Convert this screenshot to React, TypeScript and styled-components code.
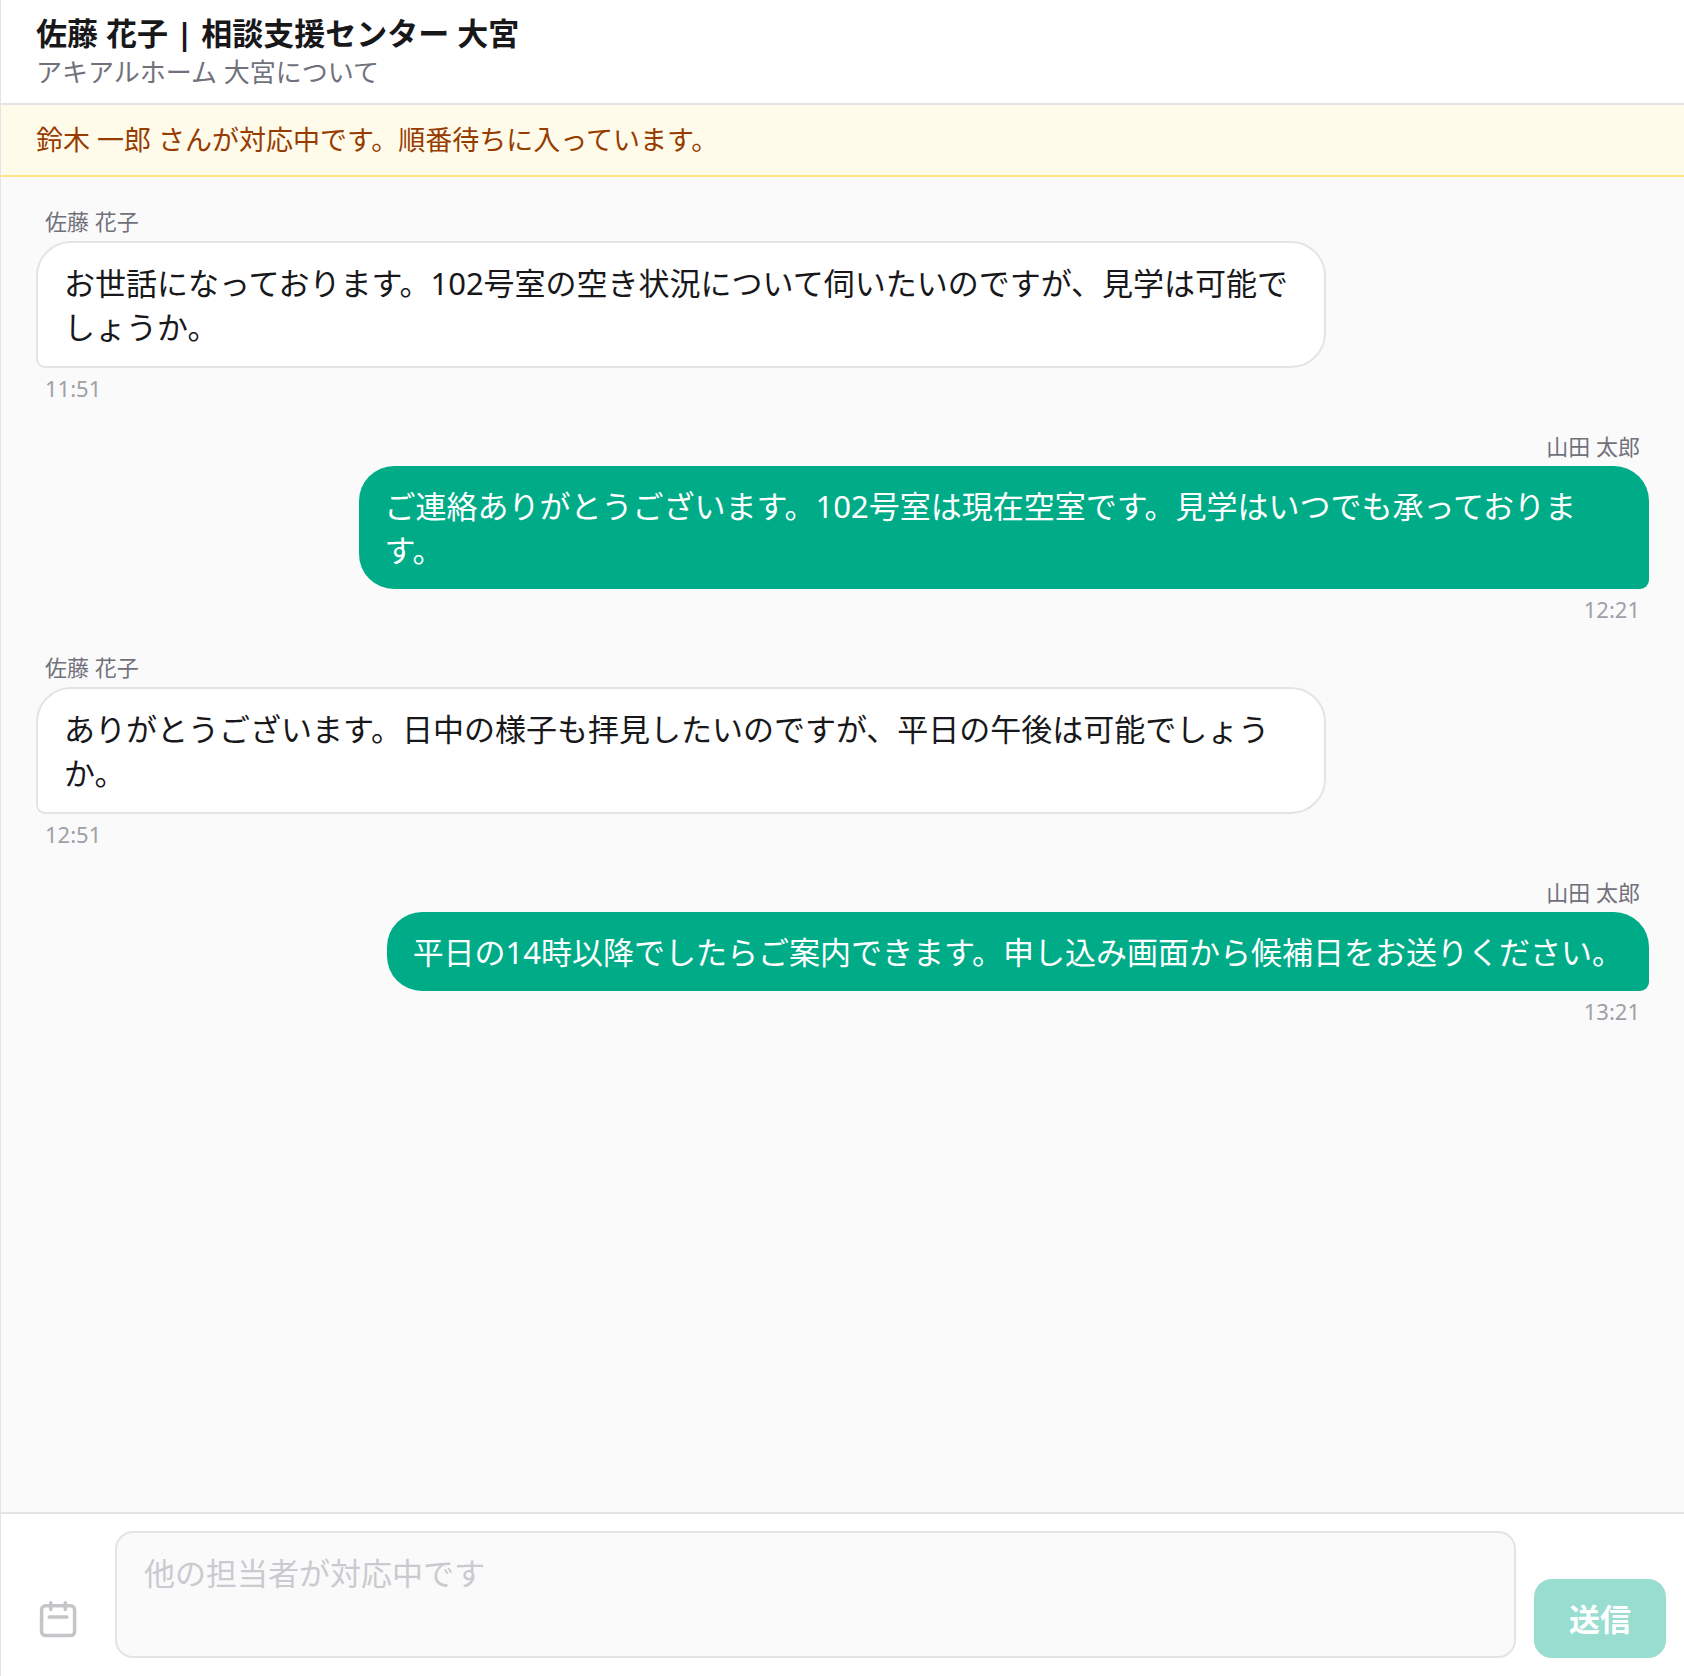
import React from "react";
import styled, { createGlobalStyle } from "styled-components";

const GlobalStyle = createGlobalStyle`
  *, *::before, *::after { box-sizing: border-box; }
  html, body { margin: 0; }
  body, button, textarea {
    font-family: "Noto Sans", "Noto Sans CJK JP", sans-serif;
  }
`;

const Panel = styled.main`
  display: flex;
  flex-direction: column;
  min-height: 100vh;
  border-left: 1px solid #e4e4e7;
  background: #fafafa;
  color: #18181b;
`;

const Header = styled.header`
  padding: 12px 35px;
  background: #ffffff;
  border-bottom: 2px solid #e4e4e7;
`;

const Title = styled.h1`
  margin: 0;
  font-size: 31px;
  line-height: 42px;
  font-weight: 700;
`;

const Subtitle = styled.p`
  margin: 0;
  font-size: 26px;
  line-height: 37px;
  color: #71717b;
`;

const Banner = styled.p`
  margin: 0;
  padding: 17px 35px;
  font-size: 27px;
  line-height: 36px;
  color: #973c00;
  background: #fffbeb;
  border-bottom: 2px solid #fee685;
`;

const MessageList = styled.ol`
  flex: 1;
  display: flex;
  flex-direction: column;
  gap: 26px;
  margin: 0;
  padding: 28px 35px;
  list-style: none;
`;

const Message = styled.li<{ $own: boolean }>`
  display: flex;
  flex-direction: column;
  gap: 4px;
  align-items: ${(p) => (p.$own ? "flex-end" : "flex-start")};
`;

const Sender = styled.span`
  padding: 0 9px;
  font-size: 22px;
  line-height: 32px;
  color: #71717b;
`;

const Bubble = styled.p<{ $own: boolean }>`
  max-width: 80%;
  margin: 0;
  padding: 18px 26px 17px;
  font-size: 31px;
  line-height: 44px;
  color: ${(p) => (p.$own ? "#ffffff" : "#18181b")};
  background: ${(p) => (p.$own ? "#00ac88" : "#ffffff")};
  border: ${(p) => (p.$own ? "none" : "2px solid #e4e4e4")};
  border-radius: ${(p) => (p.$own ? "35px 35px 9px 35px" : "35px 35px 35px 9px")};
`;

const Time = styled.time`
  padding: 0 9px;
  font-size: 22px;
  line-height: 32px;
  color: #9f9fa9;
`;

const Composer = styled.form`
  display: flex;
  align-items: flex-end;
  gap: 18px;
  padding: 17px 18px 18px 17px;
  background: #ffffff;
  border-top: 2px solid #e4e4e4;
`;

const IconButton = styled.button`
  display: grid;
  place-items: center;
  flex: none;
  width: 79px;
  height: 79px;
  padding: 0;
  border: none;
  border-radius: 18px;
  background: transparent;
  color: #71717b;
  opacity: 0.4;
`;

const MessageInput = styled.textarea`
  flex: 1;
  min-width: 0;
  height: 127px;
  padding: 18px 27px 17px;
  font-size: 31px;
  line-height: 44px;
  resize: none;
  overflow: hidden;
  background: #fafafa;
  border: 2px solid #e4e4e4;
  border-radius: 18px;
  &::placeholder {
    color: #cacad0;
    opacity: 1;
  }
`;

const SendButton = styled.button`
  flex: none;
  height: 79px;
  padding: 0 35px;
  font-size: 31px;
  font-weight: 700;
  line-height: 44px;
  color: #ffffff;
  background: #00ac88;
  border: none;
  border-radius: 18px;
  opacity: 0.4;
`;

const messages = [
  { name: "佐藤 花子", own: false, time: "11:51", text: "お世話になっております。102号室の空き状況について伺いたいのですが、見学は可能でしょうか。" },
  { name: "山田 太郎", own: true, time: "12:21", text: "ご連絡ありがとうございます。102号室は現在空室です。見学はいつでも承っております。" },
  { name: "佐藤 花子", own: false, time: "12:51", text: "ありがとうございます。日中の様子も拝見したいのですが、平日の午後は可能でしょうか。" },
  { name: "山田 太郎", own: true, time: "13:21", text: "平日の14時以降でしたらご案内できます。申し込み画面から候補日をお送りください。" },
];

const CalendarIcon = () => (
  <svg width="44" height="44" viewBox="0 0 44 44" fill="none" stroke="currentColor" strokeWidth="3.5" strokeLinecap="round" strokeLinejoin="round" aria-hidden="true">
    <rect x="5.6" y="8.8" width="33" height="29.8" rx="4" />
    <path d="M14.8 5.7v6.8M29.3 5.7v6.8M13.3 20h17.6" />
  </svg>
);

export default function App() {
  return (
    <>
      <GlobalStyle />
      <Panel lang="ja">
        <Header>
          <Title>佐藤 花子 | 相談支援センター 大宮</Title>
          <Subtitle>アキアルホーム 大宮について</Subtitle>
        </Header>
        <Banner role="status">鈴木 一郎 さんが対応中です。順番待ちに入っています。</Banner>
        <MessageList>
          {messages.map((m) => (
            <Message key={m.time} $own={m.own}>
              <Sender>{m.name}</Sender>
              <Bubble $own={m.own}>{m.text}</Bubble>
              <Time>{m.time}</Time>
            </Message>
          ))}
        </MessageList>
        <Composer onSubmit={(e) => e.preventDefault()}>
          <IconButton type="button" disabled aria-label="日程">
            <CalendarIcon />
          </IconButton>
          <MessageInput rows={2} disabled aria-label="メッセージ" placeholder="他の担当者が対応中です" />
          <SendButton type="submit" disabled>送信</SendButton>
        </Composer>
      </Panel>
    </>
  );
}
